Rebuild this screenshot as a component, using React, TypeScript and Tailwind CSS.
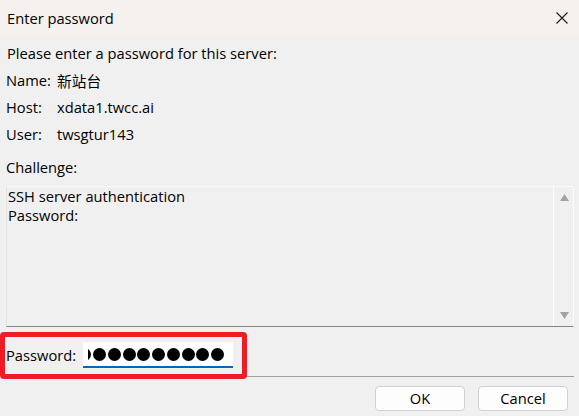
import React from "react";

const Dot = () => <span className="block w-[13px] h-[13px] shrink-0 rounded-full bg-black" />;

export default function App() {
  const dots = Array.from({ length: 10 });
  return (
    <div className="w-[579px] h-[416px] overflow-hidden bg-[#f0f0f0] text-black text-[14.7px] font-['Open_Sans','Noto_Sans_CJK_TC',sans-serif]">
      {/* Title bar */}
      <div className="h-[36px] bg-[#f4f1ee] flex items-center justify-between pl-[7px] pr-[11px]">
        <span>Enter password</span>
        <svg width="12" height="12" viewBox="0 0 12 12" className="block">
          <path d="M0.5 0.5 L11.5 11.5 M11.5 0.5 L0.5 11.5" stroke="#1a1a1a" strokeWidth="1.1" fill="none" />
        </svg>
      </div>

      {/* Body */}
      <div className="px-[6px] pt-[4px]">
        <div className="h-[27px] leading-[27px] pl-[1px]">Please enter a password for this server:</div>
        <div className="h-[27px] leading-[27px] flex">
          <span className="w-[51px]">Name:</span>
          <span className="font-['Noto_Sans_CJK_TC',sans-serif]">新站台</span>
        </div>
        <div className="h-[27px] leading-[27px] flex">
          <span className="w-[51px]">Host:</span>
          <span>xdata1.twcc.ai</span>
        </div>
        <div className="h-[27px] leading-[27px] flex">
          <span className="w-[51px]">User:</span>
          <span>twsgtur143</span>
        </div>
        <div className="mt-[6px] h-[27px] leading-[27px]">Challenge:</div>

        {/* Challenge text box */}
        <div className="mt-[5px] w-[568px] h-[141px] flex border border-[#fbfbfb] border-l-[#e2e2e2] border-b-[#858585]">
          <div className="flex-1 pl-[1px] leading-[19px]">
            <div>SSH server authentication</div>
            <div>Password:</div>
          </div>
          <div className="w-[20px] border-l border-[#fbfbfb] flex flex-col items-center justify-between pt-[7px] pb-[7px] pl-[1px]">
            <svg width="9" height="7" viewBox="0 0 9 7" className="block">
              <path d="M4.5 0 L9 7 L0 7 Z" fill="#a3a3a3" />
            </svg>
            <svg width="9" height="7" viewBox="0 0 9 7" className="block">
              <path d="M0 0 L9 0 L4.5 7 Z" fill="#a3a3a3" />
            </svg>
          </div>
        </div>

        {/* Password row */}
        <div className="relative mt-[15px] h-[26px] flex items-center">
          <span className="w-[77px]">Password:</span>
          <div className="w-[150px] h-[26px] bg-white border-b-2 border-[#0067c0] pl-[5px] pr-[9px] flex items-center">
            <div className="flex-1 overflow-hidden flex justify-end gap-[1.75px]">
              {dots.map((_, i) => (
                <Dot key={i} />
              ))}
            </div>
          </div>
          <div className="absolute left-[-6px] top-[-10px] w-[247px] h-[47px] border-[5px] border-[#ee1c25] rounded-[4px]" />
        </div>

        {/* Separator */}
        <div className="mt-[8px] h-px w-[568px] bg-[#a0a0a0]" />

        {/* Buttons */}
        <div className="mt-[9px] flex justify-end gap-[13px] pr-[5px]">
          <button className="w-[90px] h-[25px] rounded-[4px] border border-[#d1d1d1] bg-[#fdfdfd] leading-none">OK</button>
          <button className="w-[90px] h-[25px] rounded-[4px] border border-[#d1d1d1] bg-[#fdfdfd] leading-none">Cancel</button>
        </div>
      </div>
    </div>
  );
}
